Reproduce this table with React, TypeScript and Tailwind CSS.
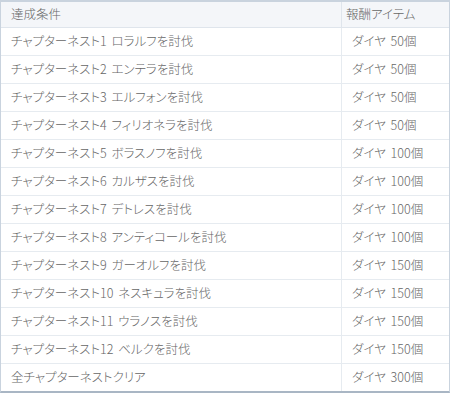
import React from 'react';

const rows: [string, string][] = [
  ['チャプターネスト1 ロラルフを討伐', 'ダイヤ 50個'],
  ['チャプターネスト2 エンテラを討伐', 'ダイヤ 50個'],
  ['チャプターネスト3 エルフォンを討伐', 'ダイヤ 50個'],
  ['チャプターネスト4 フィリオネラを討伐', 'ダイヤ 50個'],
  ['チャプターネスト5 ボラスノフを討伐', 'ダイヤ 100個'],
  ['チャプターネスト6 カルザスを討伐', 'ダイヤ 100個'],
  ['チャプターネスト7 デトレスを討伐', 'ダイヤ 100個'],
  ['チャプターネスト8 アンティコールを討伐', 'ダイヤ 100個'],
  ['チャプターネスト9 ガーオルフを討伐', 'ダイヤ 150個'],
  ['チャプターネスト10 ネスキュラを討伐', 'ダイヤ 150個'],
  ['チャプターネスト11 ウラノスを討伐', 'ダイヤ 150個'],
  ['チャプターネスト12 ベルクを討伐', 'ダイヤ 150個'],
  ['全チャプターネストクリア', 'ダイヤ 300個'],
];

export default function App() {
  return (
    <div
      className="w-[450px] bg-white text-[12.5px] font-light text-[#666] leading-none [font-feature-settings:'palt'] [word-spacing:2px]"
      style={{ fontFamily: '"Noto Sans CJK JP", "Noto Sans", sans-serif' }}>
      <div className="border-t-2 border-l border-r border-b-2 border-t-[#c9d3de] border-l-[#c9d3de] border-r-[#c9d3de] border-b-[#a9b6c4]">
        <div className="flex h-[26px] bg-[#f4f6f9] border-b border-[#dfe5ec]">
          <div className="w-[341px] flex items-center pl-[10px] border-r border-[#dfe5ec]">達成条件</div>
          <div className="flex-1 flex items-center pl-[4px]">報酬アイテム</div>
        </div>
        {rows.map(([cond, reward], i) => (
          <div
            key={i}
            className={
              i === rows.length - 1
                ? 'flex h-[27px]'
                : 'flex h-[28px] border-b border-[#e6ebf0]'
            }>
            <div className="w-[341px] flex items-center pl-[10px] border-r border-[#e6ebf0]">{cond}</div>
            <div className="flex-1 flex items-center pl-[10px]">{reward}</div>
          </div>
        ))}
      </div>
    </div>
  );
}
